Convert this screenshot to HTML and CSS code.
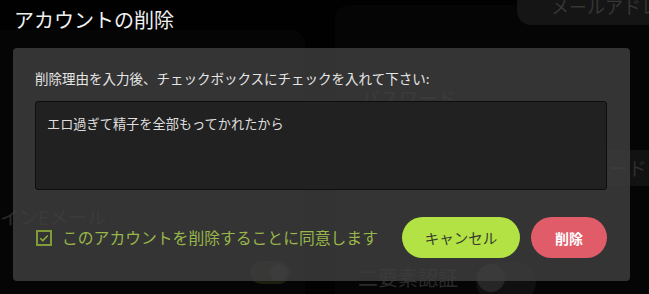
FILE: index.html
```html
<!DOCTYPE html>
<html lang="ja">
<head>
    <meta charset="UTF-8">
    <meta name="viewport" content="width=device-width, initial-scale=1.0">
    <title>アカウントの削除</title>
    <link rel="stylesheet" href="styles.css">
</head>
<body>
    <div class="page">
        <!-- settings page behind the overlay -->
        <div class="backdrop">
            <div class="ghost-card left"></div>
            <div class="ghost-card right"></div>
            <div class="ghost-pill">メールアドレス</div>
            <div class="ghost-text pw">パスワード</div>
            <div class="ghost-field">パスワード</div>
            <div class="ghost-text mail">ログインEメール</div>
            <div class="ghost-toggle on"><span></span></div>
            <div class="ghost-text tfa">二要素認証</div>
            <div class="ghost-toggle big"><span></span></div>
        </div>

        <div class="modal">
            <h1 class="modal-title">アカウントの削除</h1>
            <div class="modal-box">
                <p class="prompt">削除理由を入力後、チェックボックスにチェックを入れて下さい:</p>
                <textarea class="reason">エロ過ぎて精子を全部もってかれたから</textarea>
                <div class="modal-footer">
                    <label class="agree">
                        <span class="check-box">
                            <svg width="12" height="12" viewBox="0 0 12 12"><path d="M2.2 6.2 L4.8 8.6 L9.8 3.4" fill="none" stroke="#8fae3f" stroke-width="1.5"/></svg>
                        </span>
                        このアカウントを削除することに同意します
                    </label>
                    <button class="btn cancel">キャンセル</button>
                    <button class="btn delete">削除</button>
                </div>
            </div>
        </div>
    </div>
</body>
</html>
```

FILE: styles.css
```css
* {
    box-sizing: border-box;
}
body {
    margin: 0;
    background-color: #000;
    font-family: "Noto Sans CJK JP", "Noto Sans", sans-serif;
}
.page {
    position: relative;
    width: 649px;
    height: 294px;
    overflow: hidden;
    background-color: #010101;
}

/* backdrop */
.backdrop {
    position: absolute;
    inset: 0;
}
.ghost-card {
    position: absolute;
    background-color: #050505;
}
.ghost-card.left {
    left: -20px;
    top: 30px;
    width: 325px;
    height: 300px;
    border-top-right-radius: 14px;
}
.ghost-card.right {
    left: 335px;
    top: 5px;
    width: 340px;
    height: 300px;
    border-top-left-radius: 14px;
}
.ghost-pill {
    position: absolute;
    left: 517px;
    top: -12px;
    width: 170px;
    height: 37px;
    padding: 5px 0 0 34px;
    border-radius: 14px;
    background-color: #151515;
    color: #363636;
    font-size: 18px;
    line-height: 26px;
    white-space: nowrap;
}
.ghost-text {
    position: absolute;
    color: #2a2a2a;
    font-size: 19px;
    line-height: 24px;
    white-space: nowrap;
}
.ghost-text.pw {
    left: 361px;
    top: 86px;
}
.ghost-text.mail {
    left: -38px;
    top: 205px;
}
.ghost-text.tfa {
    left: 358px;
    top: 266px;
    font-size: 20px;
}
.ghost-field {
    position: absolute;
    left: 560px;
    top: 150px;
    width: 120px;
    height: 36px;
    background-color: #121212;
    color: #2e2e2e;
    font-size: 19px;
    line-height: 36px;
    white-space: nowrap;
    text-indent: -8px;
}
.ghost-toggle {
    position: absolute;
    border-radius: 20px;
    background-color: #101010;
}
.ghost-toggle span {
    position: absolute;
    border-radius: 50%;
    background-color: #262626;
}
.ghost-toggle.on {
    left: 250px;
    top: 261px;
    width: 40px;
    height: 23px;
    background-color: #1a1f10;
}
.ghost-toggle.on span {
    right: 3px;
    top: 3px;
    width: 17px;
    height: 17px;
    background-color: #2e2e2e;
}
.ghost-toggle.big {
    left: 476px;
    top: 262px;
    width: 60px;
    height: 40px;
}
.ghost-toggle.big span {
    left: 1px;
    top: 2px;
    width: 28px;
    height: 28px;
}

/* modal */
.modal {
    position: absolute;
    inset: 0;
    padding: 0 19px 13px 13px;
    display: flex;
    flex-direction: column;
}
.modal-title {
    margin: 0 0 14px 1px;
    padding-top: 6px;
    font-size: 20px;
    font-weight: normal;
    line-height: 28px;
    color: #f0f0f0;
}
.modal-box {
    width: 617px;
    height: 233px;
    padding: 20px 23px 23px 22px;
    border-radius: 4px;
    background-color: rgba(64, 64, 64, 0.8);
}
.prompt {
    margin: 0 0 13px;
    font-size: 13.5px;
    line-height: 20px;
    color: #e6e6e6;
}
.reason {
    display: block;
    width: 572px;
    height: 89px;
    margin: 0;
    padding: 12px 11px;
    border: 1px solid #0e0e0e;
    border-radius: 3px;
    background-color: #212121;
    color: #dedede;
    font-family: inherit;
    font-size: 13.2px;
    line-height: 20px;
    resize: none;
    outline: none;
}
.modal-footer {
    display: flex;
    align-items: center;
    margin-top: 27px;
}
.agree {
    display: flex;
    align-items: center;
    gap: 10px;
    margin-left: 1px;
    margin-right: auto;
    color: #98b649;
    font-size: 15.8px;
    line-height: 22px;
}
.check-box {
    display: flex;
    align-items: center;
    justify-content: center;
    width: 16px;
    height: 16px;
    border: 2px solid #7f9c38;
}
.btn {
    height: 41px;
    border: none;
    border-radius: 21px;
    font-family: inherit;
    font-size: 14.5px;
}
.cancel {
    width: 118px;
    margin-right: 11px;
    background-color: #b2e243;
    color: #383c30;
}
.delete {
    width: 76px;
    background-color: #e05c68;
    color: #fff;
    font-weight: bold;
    font-size: 14px;
}
```
